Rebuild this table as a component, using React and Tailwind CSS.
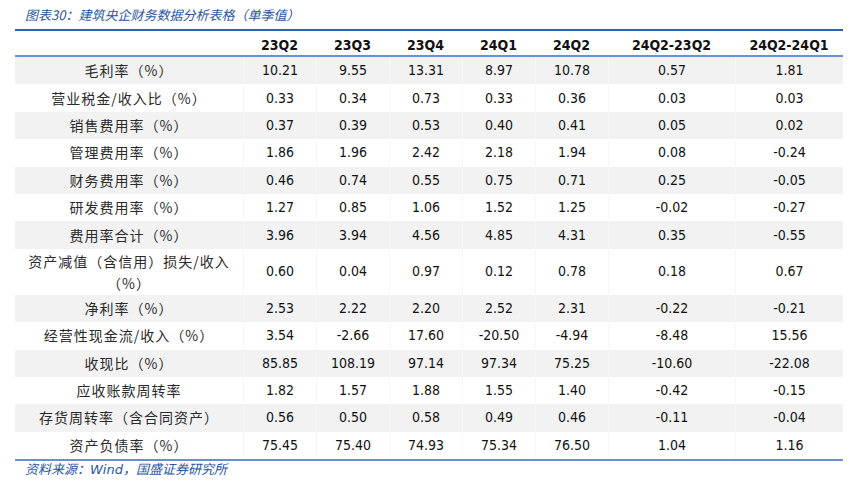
import React from 'react';

const cols = ['23Q2', '23Q3', '23Q4', '24Q1', '24Q2', '24Q2-23Q2', '24Q2-24Q1'];
const widths = ['w-[73px]', 'w-[73px]', 'w-[73px]', 'w-[73px]', 'w-[73px]', 'w-[127px]', 'w-[108px]'];

const rows = [
  { label: '毛利率（%）', values: ['10.21', '9.55', '13.31', '8.97', '10.78', '0.57', '1.81'] },
  { label: '营业税金/收入比（%）', values: ['0.33', '0.34', '0.73', '0.33', '0.36', '0.03', '0.03'] },
  { label: '销售费用率（%）', values: ['0.37', '0.39', '0.53', '0.40', '0.41', '0.05', '0.02'] },
  { label: '管理费用率（%）', values: ['1.86', '1.96', '2.42', '2.18', '1.94', '0.08', '-0.24'] },
  { label: '财务费用率（%）', values: ['0.46', '0.74', '0.55', '0.75', '0.71', '0.25', '-0.05'] },
  { label: '研发费用率（%）', values: ['1.27', '0.85', '1.06', '1.52', '1.25', '-0.02', '-0.27'] },
  { label: '费用率合计（%）', values: ['3.96', '3.94', '4.56', '4.85', '4.31', '0.35', '-0.55'] },
  { label: ['资产减值（含信用）损失/收入', '（%）'], values: ['0.60', '0.04', '0.97', '0.12', '0.78', '0.18', '0.67'] },
  { label: '净利率（%）', values: ['2.53', '2.22', '2.20', '2.52', '2.31', '-0.22', '-0.21'] },
  { label: '经营性现金流/收入（%）', values: ['3.54', '-2.66', '17.60', '-20.50', '-4.94', '-8.48', '15.56'] },
  { label: '收现比（%）', values: ['85.85', '108.19', '97.14', '97.34', '75.25', '-10.60', '-22.08'] },
  { label: '应收账款周转率', values: ['1.82', '1.57', '1.88', '1.55', '1.40', '-0.42', '-0.15'] },
  { label: '存货周转率（含合同资产）', values: ['0.56', '0.50', '0.58', '0.49', '0.46', '-0.11', '-0.04'] },
  { label: '资产负债率（%）', values: ['75.45', '75.40', '74.93', '75.34', '76.50', '1.04', '1.16'] },
];

const numFont = "font-['DejaVu_Sans_Condensed','DejaVu_Sans',sans-serif]";
const cjkFont = "font-['Noto_Sans_CJK_SC',sans-serif]";

export default function App() {
  return (
    <div className="w-[867px] h-[501px] bg-white px-[15px] overflow-hidden">
      {/* Title */}
      <div className={`h-[29px] flex items-center pl-[10px] italic text-[13px] text-[#2a56a0] ${cjkFont}`}>
        图表30：建筑央企财务数据分析表格（单季值）
      </div>

      <div className="w-[828px] border-t-2 border-[#2f62ad]">
        {/* Header */}
        <div className={`flex h-[26px] pt-[5px] border-b-2 border-[#6a91cb] text-[14px] font-bold text-[#111] ${numFont}`}>
          <div className="w-[228px]" />
          {cols.map((c, i) => (
            <div key={c} className={`${widths[i]} flex items-center justify-center`}>{c}</div>
          ))}
        </div>

        {/* Body */}
        {rows.map((row, r) => {
          const gray = r % 2 === 0;
          const tall = Array.isArray(row.label);
          return (
            <div
              key={r}
              className={`flex ${tall ? 'h-[46px]' : 'h-[27.4px]'} ${gray ? 'bg-[#f2f2f2]' : 'bg-white'}`}
            >
              <div className={`w-[228px] flex flex-col items-center justify-center text-[14px] tracking-[1px] text-[#2a2a2a] ${cjkFont} ${tall ? 'leading-[22px]' : ''}`}>
                {tall ? row.label.map((l) => <span key={l}>{l}</span>) : row.label}
              </div>
              {row.values.map((v, i) => (
                <div
                  key={i}
                  className={`${widths[i]} border-l border-[#f7f7f7] flex items-center justify-center text-[14px] text-[#111] ${numFont}`}
                >
                  {v}
                </div>
              ))}
            </div>
          );
        })}
        <div className="border-t-2 border-[#6a8fc9]" />
      </div>

      {/* Source */}
      <div className={`pl-[10px] pt-[1px] leading-[14px] italic text-[13px] text-[#2a56a0] ${cjkFont}`}>
        资料来源：<span className="font-['DejaVu_Sans',sans-serif]">Wind</span>，国盛证券研究所
      </div>
    </div>
  );
}
